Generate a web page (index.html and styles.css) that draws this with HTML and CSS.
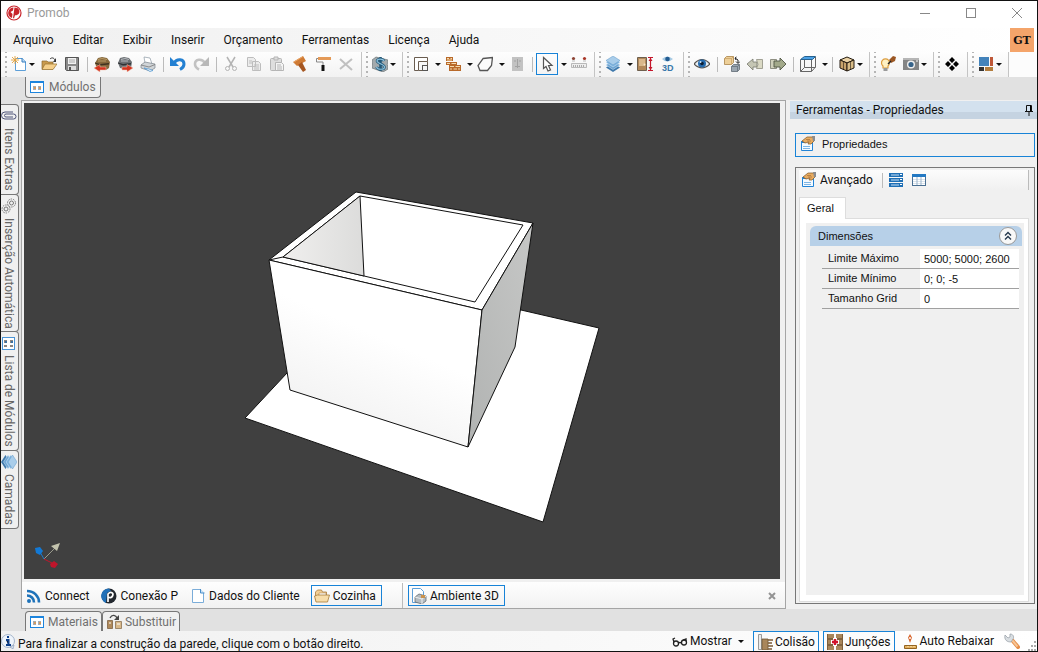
FILE: index.html
```html
<!DOCTYPE html>
<html lang="pt-br">
  <head>
    <meta charset="utf-8">

    <title>Promob</title>

    <link rel="stylesheet" href="styles.css">
  </head>

  <body>
    <!-- shared icons -->
    <svg class="sprite" width="0" height="0">
      <symbol id="i-modules" viewBox="0 0 16 16">
        <rect x="1.5" y="2.5" width="13" height="11" fill="#fff" stroke="#1c84dd"/>
        <path d="M1 2h14v2H1z" fill="#1c84dd"/>
        <path d="M4 7h3v4H4zM9 7h3v4H9z" fill="#a5acb3"/>
        <path d="M5 8h2v2H5zM10 8h2v2h-2z" fill="#d39a60"/>
      </symbol>
      <symbol id="i-layers" viewBox="0 0 16 16">
        <path d="M8 7l7 4.500-7 4.500-7-4.500z" fill="#3f79ac"/>
        <path d="M8 4.500l7 4.500-7 4.500L1 9z" fill="#6ba3d2" stroke="#dcebf7" stroke-width=".5"/>
        <path d="M8 2l7 4.500L8 11 1 6.500z" fill="#7fb4df" stroke="#dcebf7" stroke-width=".5"/>
        <path d="M8 0l7 4.500L8 9 1 4.500z" fill="#a9cdea" stroke="#5e98c8" stroke-width=".5"/>
      </symbol>
      <symbol id="i-hand" viewBox="0 0 16 16">
        <path d="M1.500 5.500h11v9h-11z" fill="#f4faff" stroke="#2384d6"/>
        <path d="M1 5h5v2H1z" fill="#2384d6"/>
        <path d="M3 10.500h7M3 12.500h7" stroke="#7db5e4"/>
        <path d="M2 5l5-4h7v4l-3 3H8l1-2-4 1z" fill="#e8ac62" stroke="#80531f" stroke-width=".7"/>
        <path d="M6 3.500h4M7 5h4" stroke="#a8713a" stroke-width=".7"/>
        <path d="M12 0h3v5h-2z" fill="#8b8d90"/>
      </symbol>
    </svg>

    <div class="window">
      <header class="titlebar">
        <svg class="logo" viewBox="0 0 16 16" width="16" height="16">
          <circle cx="8" cy="8" r="7" fill="#fff" stroke="#c8242b" stroke-width="1.2"/>
          <path d="M7.500 2.500A5.500 5.500 0 0 0 4 12l2 1 .5-4L4.500 7 7 5.500z" fill="#c8242b"/>
          <path d="M8.500 2.500c4 0 6 3 4.500 6-1 1.500-3 2-4 1.700L8 13.500l-1-.5L8 6z" fill="#c8242b"/>
        </svg>
        <h1>Promob</h1>
        <div class="window-buttons">
          <button aria-label="Minimizar"><svg width="12" height="12"><path d="M1 6.500h10" stroke="#888"/></svg></button>
          <button aria-label="Maximizar"><svg width="12" height="12"><rect x="1.500" y="1.500" width="9" height="9" fill="none" stroke="#888"/></svg></button>
          <button aria-label="Fechar"><svg width="12" height="12"><path d="M1 1l10 10M11 1L1 11" stroke="#888"/></svg></button>
        </div>
      </header>

      <nav class="menubar">
        <button>Arquivo</button>
        <button>Editar</button>
        <button>Exibir</button>
        <button>Inserir</button>
        <button>Orçamento</button>
        <button>Ferramentas</button>
        <button>Licença</button>
        <button>Ajuda</button>
        <button class="account">GT</button>
      </nav>

      <div class="toolbar">
        <div class="group">
          <button class="tool narrow" aria-label="Novo"><svg viewBox="0 0 16 16"><path d="M4.500 2.500h7l3 3v9h-10z" fill="#fff" stroke="#5d9fd8"/><path d="M11 2v4h4" fill="#b9d8f2" stroke="#3b7fbe"/><path d="M4 0v8M0 4h8M1 1l6 6M7 1L1 7" stroke="#e5a23a" stroke-width=".9"/></svg><i class="arrow"></i></button>
          <button class="tool" aria-label="Abrir"><svg viewBox="0 0 16 16"><path d="M1 13V5h5l1 1h5v7z" fill="#c99a4e" stroke="#8b682f" stroke-width=".7"/><path d="M1 13.500L4 8h12l-4 5.500z" fill="#f5cf8a" stroke="#95702f" stroke-width=".7"/><path d="M9 3c2-2 4-1 5 1" fill="none" stroke="#333"/><path d="M15 2v4h-3z" fill="#333"/></svg></button>
          <button class="tool" aria-label="Salvar"><svg viewBox="0 0 16 16"><path d="M1.500 1.500h13v13h-12l-1-1z" fill="#8a8a8a" stroke="#555"/><path d="M4 2h8v6H4z" fill="#f2f2f2"/><path d="M4 10h8v4H4z" fill="#ddd"/><path d="M5 11h2v3H5z" fill="#555"/><path d="M5 4h6M5 6h6" stroke="#aaa"/></svg></button>
          <span class="sep"></span>
          <button class="tool" aria-label="Importar"><svg viewBox="0 0 16 16"><path d="M4 2l4-1 5 1 3 4-1 6-3 2-9-1-2-6z" fill="#86683c"/><path d="M1 6.500l5 1.500 9-1v1.500l-9 1-5-2z" fill="#3f3220"/><path d="M4 3.500l4-1 5 1M4 5h8" fill="none" stroke="#b89a66"/><path d="M6 8.500v2.500h6v3H6v2L0 12z" fill="#d4341f" stroke="#f3c3b0" stroke-width=".5"/></svg></button>
          <button class="tool" aria-label="Exportar"><svg viewBox="0 0 16 16"><path d="M3 2l4-1 5 1 3 4-1 6-3 2-8-2-2-5z" fill="#6c7074"/><path d="M1 6.500l5 1.500 8-1v1.500l-8 1-5-2z" fill="#2f3234"/><path d="M4 3.500l4-1 4 1M4 5h7" fill="none" stroke="#b4b8bc"/><path d="M10 8.500v2.500H5v3h5v2l6-4z" fill="#d4341f" stroke="#f3c3b0" stroke-width=".5"/></svg></button>
          <button class="tool" aria-label="Imprimir"><svg viewBox="0 0 16 16"><path d="M4 1l6 1 2 6-7-1z" fill="#fff" stroke="#8d99a5" stroke-width=".7"/><path d="M1 9l4-3 10 2v4l-5 3-9-3z" fill="#d0d4d7" stroke="#7d858c" stroke-width=".7"/><path d="M1 9l8 2 6-2.500" fill="none" stroke="#777" stroke-width=".8"/><path d="M4 12l5 1 4 1.500-3 1z" fill="#e9f4fc" stroke="#3a8ccd" stroke-width=".6"/></svg></button>
          <span class="sep"></span>
          <button class="tool" aria-label="Desfazer"><svg viewBox="0 0 16 16"><path d="M4 7c3-5 10-4 10 1 0 3-2 4.500-4 5.500" fill="none" stroke="#2380d2" stroke-width="3"/><path d="M0 1v9h9z" fill="#2380d2"/></svg></button>
          <button class="tool" aria-label="Refazer"><svg viewBox="0 0 16 16"><path d="M12 7C9 2 2 3 2 8c0 3 2 4.500 4 5.500" fill="none" stroke="#c2c2c2" stroke-width="2.600"/><path d="M16 1v9H7z" fill="#b8b8b8"/></svg></button>
          <span class="sep"></span>
          <button class="tool" aria-label="Recortar"><svg viewBox="0 0 16 16" fill="none" stroke="#b4b4b4"><path d="M4 1l6 10M12 1L6 11" stroke-width="1.500"/><circle cx="4.500" cy="12.500" r="2"/><circle cx="11.500" cy="12.500" r="2"/></svg></button>
          <button class="tool" aria-label="Copiar"><svg viewBox="0 0 16 16" fill="#ececec" stroke="#bdbdbd"><path d="M1.500 1.500h6l2 2v7h-8zM6.500 5.500h6l2 2v7h-8z"/><path d="M3 5h3M3 7h3M8 9h5M8 11h5M8 13h5"/></svg></button>
          <button class="tool" aria-label="Colar"><svg viewBox="0 0 16 16" fill="#dedede" stroke="#b5b5b5"><rect x="1.500" y="2.500" width="11" height="12" rx="1"/><path d="M5 1h4v3H5z"/><path d="M6.500 6.500h6l2 2v6h-8z" fill="#f4f4f4"/><path d="M8 9h4M8 11h5M8 13h5"/></svg></button>
          <button class="tool" aria-label="Aplicar material"><svg viewBox="0 0 16 16"><path d="M1 6l10-6 3 5-9 5z" fill="#cf7b35"/><path d="M6 9l4-3 4 8-3 2z" fill="#a55620"/><path d="M2 6l9-5.500" stroke="#eaa566"/></svg></button>
          <button class="tool" aria-label="Pintar"><svg viewBox="0 0 16 16"><path d="M3 1h13v3H3z" fill="#e49a58"/><path d="M3 2.500H1.500V6H8v3" fill="none" stroke="#888"/><path d="M6.500 9h3v6h-3z" fill="#111"/></svg></button>
          <button class="tool" aria-label="Excluir"><svg viewBox="0 0 16 16"><path d="M2 3l12 11M14 3L2 13" stroke="#c0c0c0" stroke-width="2"/></svg></button>
        </div>

        <div class="group">
          <button class="tool narrow" aria-label="Orçamento"><svg viewBox="0 0 16 16"><path d="M0 4l4-3 12 3v3l-1 2 1 1v3l-5 3-11-4v-3l1-1-1-1z" fill="#a3aaad" stroke="#6a7276" stroke-width=".7"/><path d="M12 5C11 2.500 5 2.500 5 5s7.500 3 7.500 6-7 3-8 0M8.500 1v14" fill="none" stroke="#235877" stroke-width="2.600"/><path d="M12 5C11 2.500 5 2.500 5 5s7.500 3 7.500 6-7 3-8 0" fill="none" stroke="#8cc2df" stroke-width="1.200"/></svg><i class="arrow"></i></button>
        </div>

        <div class="group">
          <button class="tool wide" aria-label="Ambiente"><svg viewBox="0 0 16 16" fill="none"><path d="M1.500 14.500v-13h13v4h-9v9z" fill="#fff" stroke="#6a5d50"/><rect x="9.500" y="9.500" width="5" height="5" stroke="#555"/><path d="M9.500 14.500h-4M14.500 9.500v-4" stroke="#6a5d50"/></svg><i class="arrow"></i></button>
          <button class="tool wide" aria-label="Paredes"><svg viewBox="0 0 16 16"><path d="M1 1h7v4H1zM1 6h11v3H1zM4 9h12v6H4z" fill="#b8692a"/><path d="M2 2.500h2M5.500 2.500H7M2 4h5M2 7.500h3M6.500 7.500H11M5 10.500h4M10.500 10.500H15M5 13h2M8.500 13H12M13 13h2" stroke="#f5dcae" stroke-width="1.200"/></svg><i class="arrow"></i></button>
          <button class="tool wide" aria-label="Piso"><svg viewBox="0 0 16 16"><path d="M6 2.500l9.500-1-1 8-4 5H3l-2-5z" fill="#fbfbfb" stroke="#555" stroke-width="1.300"/></svg><i class="arrow"></i></button>
          <button class="tool" aria-label="Porta"><svg viewBox="0 0 16 16"><path d="M3 1h11v14H3z" fill="#c2c2c2"/><path d="M8.500 3v9M6 10.500h5M10 5h2M5 5h2" stroke="#a2a2a2"/></svg></button>
          <span class="sep"></span>
          <button class="tool wide pressed" aria-label="Selecionar"><svg viewBox="0 0 16 16"><path d="M4.500 1.500v11l2.500-2 2 4.500 2.500-1-2-4.500h3.500z" fill="#fff" stroke="#555" stroke-width="1.200"/></svg><i class="arrow"></i></button>
          <button class="tool" aria-label="Medir"><svg viewBox="0 0 16 16"><path d="M.5 7.500h15v4H.5z" fill="#eee" stroke="#aaa" stroke-width=".8"/><path d="M2.500 9v2M4.500 9v2M6.500 9v2M8.500 9v2M10.500 9v2M12.500 9v2" stroke="#999" stroke-width=".8"/><circle cx="2.500" cy="2.500" r="1.600" fill="#8c4334"/><circle cx="13.500" cy="2.500" r="1.600" fill="#a93627"/><path d="M1 5h3M12 5h3" stroke="#bbb"/></svg></button>
        </div>

        <div class="group">
          <button class="tool wide" aria-label="Camadas"><svg><use href="#i-layers"/></svg><i class="arrow"></i></button>
          <button class="tool" aria-label="Altura"><svg viewBox="0 0 16 16"><path d="M.5 1.500h9v13h-9z" fill="#b2885a" stroke="#6e5f4d"/><path d="M2 3h6v7H2z" fill="#d9b88c"/><circle cx="7.500" cy="8.500" r="1" fill="#f5e3c5"/><path d="M11 1.500h5M11 14.500h5M13.500 2v12" stroke="#c4162b" stroke-width="1.200"/><path d="M11.500 5l2-3 2 3zM11.500 11l2 3 2-3z" fill="#c4162b"/></svg></button>
          <button class="tool" aria-label="Visualizar 3D"><svg viewBox="0 0 16 16"><path d="M2 3q5-5 11 0-6 5-11 0z" fill="#a6cae4"/><circle cx="7.500" cy="3" r="2.300" fill="#235c91"/><text class="icon-text" x="2" y="15">3D</text></svg></button>
        </div>

        <div class="group">
          <button class="tool" aria-label="Mostrar"><svg viewBox="0 0 16 16"><path d="M0 8q8-9 16 0-8 8-16 0z" fill="#e8eef3" stroke="#57534f" stroke-width="1.200"/><circle cx="8" cy="7.500" r="4" fill="#266bad"/><circle cx="8" cy="7.500" r="1.800" fill="#0d1e33"/><circle cx="6.500" cy="6" r="1" fill="#cfe5f7"/></svg></button>
          <span class="sep"></span>
          <button class="tool" aria-label="Trocar"><svg viewBox="0 0 16 16"><path d="M.5 2.500l2-2h7v6l-2 2h-7z" fill="#edcf98" stroke="#a98349" stroke-width=".8"/><path d="M.5 2.500h7l2-2M7.500 2.500v6" fill="none" stroke="#c9a368" stroke-width=".8"/><path d="M7.500 10.500l2-2h6v5l-2 2h-6z" fill="#9ba6b0" stroke="#5f6a74" stroke-width=".8"/><path d="M7.500 10.500h6l2-2M13.500 10.500v5" fill="none" stroke="#5f6a74" stroke-width=".7"/><path d="M11 2l3 2v3M12 5.500l2 2 2-2M12.500 1L11 2l1 2" fill="none" stroke="#222"/></svg></button>
          <button class="tool" aria-label="Anterior"><svg viewBox="0 0 16 16"><path d="M0 8l6-5v3h4v5H6v3z" fill="#c5c6b4" stroke="#77786d" stroke-width=".8"/><path d="M9.500 3.500h6v9h-6l1.500-4z" fill="#dad9c4" stroke="#8e8e80" stroke-width=".8"/></svg></button>
          <button class="tool" aria-label="Próximo"><svg viewBox="0 0 16 16"><path d="M.5 3.500h6v9h-6z" fill="#cfd0bb" stroke="#77786b" stroke-width=".8"/><path d="M16 8l-6-6v3H4v6h6v3z" fill="#a2a98a" stroke="#4f5544" stroke-width=".9"/></svg></button>
          <span class="sep"></span>
          <button class="tool wide" aria-label="Vista"><svg viewBox="0 0 16 16" fill="none" stroke="#666"><path d="M4.500.5h11l-3 3h-12z" fill="#4aa0e5" stroke="#28628f"/><path d="M.5 4v11.500h11V4M15.500 1v10l-4 4.500M4.500 4v7.500h11M.5 15.500l4-4"/></svg><i class="arrow"></i></button>
          <span class="sep"></span>
          <button class="tool narrow" aria-label="Renderização"><svg viewBox="0 0 16 16" stroke="#241b10"><path d="M1 4l7-3 7 3-7 3z" fill="#ead2a5"/><path d="M1 4l7 3v8l-7-3z" fill="#c8a36b"/><path d="M8 7l7-3v8l-7 3z" fill="#d9bd88"/><path d="M4.500 5.500v8M11.500 5.500v8" stroke-width=".6"/></svg><i class="arrow"></i></button>
        </div>

        <div class="group">
          <button class="tool" aria-label="Luz"><svg viewBox="0 0 16 16"><path d="M3 10a4 4 0 1 1 5 0v2H3z" fill="#fff1c3" stroke="#dc9d3e" stroke-width="1.200"/><path d="M3.500 12h4v3h-4z" fill="#999"/><path d="M9 4l4-4 3 1-1 4-4 2z" fill="#9b5723"/><path d="M8 8l3-3" stroke="#222" stroke-width="1.400"/></svg></button>
          <button class="tool narrow" aria-label="Câmera"><svg viewBox="0 0 16 16"><path d="M0 2h16v12H0z" fill="#848484"/><path d="M0 2h16v2H0z" fill="#b6b6b6"/><circle cx="8" cy="8.500" r="4" fill="#eee"/><circle cx="8" cy="8.500" r="2.600" fill="#376389"/><path d="M13 5h2" stroke="#fff"/></svg><i class="arrow"></i></button>
        </div>

        <div class="group">
          <button class="tool" aria-label="Plugins"><svg viewBox="0 0 16 16"><path d="M8 1l3 3-3 3-3-3zM4 5l3 3-3 3-3-3zM12 5l3 3-3 3-3-3zM8 9l3 3-3 3-3-3z" fill="#000"/></svg></button>
        </div>

        <div class="group">
          <button class="tool narrow" aria-label="Leiaute"><svg viewBox="0 0 16 16"><path d="M1 1h10v9H1z" fill="#4383bb"/><path d="M12 1h3v9h-3z" fill="#be5738"/><path d="M1 11h5v4H1z" fill="#333"/><path d="M7 11h8v4H7z" fill="#b37d3d"/></svg><i class="arrow"></i></button>
        </div>
      </div>

      <div class="tabs tabs-top">
        <button class="tab"><svg><use href="#i-modules"/></svg>Módulos</button>
      </div>

      <main class="workspace">
        <div class="side-tabs">
          <button class="side-tab"><svg viewBox="0 0 16 16" fill="none" stroke="#4e5479"><path d="M12 4H4a3.500 3.500 0 0 0 0 7h8.500a2.500 2.500 0 0 0 0-5H5a1.500 1.500 0 0 0 0 3h7"/></svg>Itens Extras</button>
          <button class="side-tab"><svg viewBox="0 0 16 16" fill="none" stroke="#777"><circle cx="10.500" cy="5" r="4" stroke-dasharray="1.500 1"/><circle cx="10.500" cy="5" r="2"/><circle cx="5" cy="11" r="4" stroke-dasharray="1.500 1"/><circle cx="5" cy="11" r="2"/></svg>Inserção Automática</button>
          <button class="side-tab"><svg viewBox="0 0 16 16"><rect x="1.500" y="2.500" width="12" height="12" fill="#fff" stroke="#4a94d6"/><path d="M3 5h3v3H3zM9 5h3v3H9zM3 10h3v2H3zM9 10h3v2H9z" fill="#8b8580"/><path d="M4 6h2v2H4zM10 6h2v2h-2z" fill="#3c70a0"/></svg>Lista de Módulos</button>
          <button class="side-tab"><svg class="turned"><use href="#i-layers"/></svg>Camadas</button>
        </div>

        <section class="document">
          <svg class="scene" viewBox="24 103 756 476" role="img" aria-label="Ambiente 3D">
            <defs>
              <linearGradient id="front" x1=".7" y1="0" x2=".2" y2="1"><stop offset=".4" stop-color="#fff"/><stop offset="1" stop-color="#eee"/></linearGradient>
              <linearGradient id="side" x1="0" y1="1" x2="1" y2="0"><stop offset="0" stop-color="#b1b3b2"/><stop offset="1" stop-color="#c6c7c6"/></linearGradient>
              <linearGradient id="inner"><stop offset="0" stop-color="#f0efee"/><stop offset="1" stop-color="#dcdcdb"/></linearGradient>
            </defs>
            <g stroke="#111" stroke-linejoin="round">
              <path d="M245 418l42-45 234-63 78 18-56 194z" fill="#fff"/>
              <path d="M269 260l87-68 177 31-51 87z" fill="#fff"/>
              <path d="M283 257l77-61 163 29-48 77z" fill="#fff"/>
              <path d="M283 257l77-61 4 80z" fill="url(#inner)"/>
              <path d="M269 260l14-3" fill="none"/>
              <path d="M269 260l213 50-14 137-178-57z" fill="url(#front)"/>
              <path d="M482 310l51-87-18 124-47 100z" fill="url(#side)"/>
            </g>
            <path d="M44 559l12-12" stroke="#999a8c"/>
            <path d="M60 543l-3 8-6-5z" fill="#c3c3ad"/>
            <path d="M44 559l-4-7" stroke="#1b7bd0"/>
            <path d="M35 548l5-1 3 4-3 4-4-2z" fill="#1279d6"/>
            <path d="M44 559l8 4" stroke="#c0152b"/>
            <path d="M50 564l4-3 4 3-3 4-4-1z" fill="#c0152b"/>
          </svg>

          <div class="views">
            <div class="view-group first">
              <button class="view"><svg viewBox="0 0 16 16" fill="none" stroke="#1e72b9" stroke-width="2.600"><path d="M1 7.500c4 0 7 3 7 7M1 3c7 0 12 5 12 11.500"/><circle cx="3" cy="13" r="1" fill="#1e72b9" stroke-width="2"/></svg>Connect</button>
              <button class="view"><svg viewBox="0 0 16 16"><circle cx="8" cy="8" r="7.500" fill="#23282f"/><path d="M8 .5A7.500 7.500 0 0 0 5 15L6 5l4-2z" fill="#2170b8"/><path d="M7 14V6c3-3 6-1 4.500 2-1 2-3 2-4 1" fill="none" stroke="#fff" stroke-width="1.700"/></svg>Conexão P</button>
              <button class="view"><svg viewBox="0 0 16 16"><path d="M2.500 1.500h8l3 3v10h-11z" fill="#fff" stroke="#7badd9"/><path d="M10.500 1v4h4" fill="#c9e2f7" stroke="#4b8fca"/></svg>Dados do Cliente</button>
              <button class="view current"><svg viewBox="0 0 16 16"><path d="M1.500 12V4l2-2h4l1 2h4v8z" fill="#f2cf95" stroke="#a87b3c" stroke-width=".8"/><path d="M5 5h7v4H5z" fill="#fff" stroke="#b58b4d" stroke-width=".6"/><path d="M.5 8l3-1h12l-2 7H2z" fill="#f7ddaa" stroke="#a67b38" stroke-width=".8"/></svg>Cozinha</button>
            </div>
            <div class="view-group">
              <button class="view current"><svg viewBox="0 0 16 16"><path d="M1.500.5h8l3 3v11h-11z" fill="#fff" stroke="#5d9fd8"/><path d="M4 9l4-3 7 2v5l-4 3-7-2z" fill="#b4bbc0" stroke="#666d73" stroke-width=".8"/><path d="M4 9l7 2 4-3M11 11v5" fill="none" stroke="#eee"/><path d="M10 7h4v3h-4z" fill="#c9914b"/></svg>Ambiente 3D</button>
            </div>
            <button class="close" aria-label="Fechar vista"><svg viewBox="0 0 8 8" width="8" height="8"><path d="M1 1l6 6M7 1L1 7" stroke="#949494" stroke-width="2"/></svg></button>
          </div>
        </section>

        <aside class="panel">
          <h2>Ferramentas - Propriedades<svg viewBox="0 0 8 12" width="8" height="12"><path d="M1.500 7V1.500h5V7M0 7.500h8M4 8v4" fill="none" stroke="#111"/><path d="M5 1h1v6H5z"/></svg></h2>
          <button class="panel-switch"><svg><use href="#i-hand"/></svg>Propriedades</button>
          <div class="properties">
            <div class="prop-toolbar">
              <button class="advanced"><svg><use href="#i-hand"/></svg>Avançado</button>
              <span class="sep"></span>
              <button aria-label="Categorias"><svg viewBox="0 0 16 16"><path d="M1 1h14v4H1zM1 6h14v4H1zM1 11h14v4H1z" fill="#1f6fb5"/><path d="M3 3h8M3 8h8M3 13h8" stroke="#c8e1f6"/><path d="M12 2.500h2M12 7.500h2M12 12.500h2" stroke="#fff"/></svg></button>
              <button aria-label="Tabela"><svg viewBox="0 0 16 16"><rect x="1.500" y="2.500" width="13" height="11" fill="#fff" stroke="#4a6f92"/><path d="M1 2h14v3H1z" fill="#2479c3"/><path d="M2 7.500h12M2 9.500h12M2 11.500h12" stroke="#dbe4ec"/><path d="M6 5v8M10 5v8" stroke="#9db5cb"/></svg></button>
            </div>
            <button class="page-tab">Geral</button>
            <div class="page">
              <div class="page-inner">
                <h3>Dimensões<button aria-label="Recolher"><svg viewBox="0 0 16 16"><path d="M5 7.500l3-3 3 3M5 11.500l3-3 3 3" fill="none" stroke="#26394d" stroke-width="1.400"/></svg></button></h3>
                <div class="fields">
                  <label for="limiteMax">Limite Máximo</label><input type="text" id="limiteMax" value="5000; 5000; 2600">
                  <label for="limiteMin">Limite Mínimo</label><input type="text" id="limiteMin" value="0; 0; -5">
                  <label for="grid">Tamanho Grid</label><input type="text" id="grid" value="0">
                </div>
              </div>
            </div>
          </div>
        </aside>
      </main>

      <div class="tabs tabs-bottom">
        <button class="tab"><svg><use href="#i-modules"/></svg>Materiais</button>
        <button class="tab"><svg viewBox="0 0 16 16"><path d="M1.500 6.500h5v8h-5z" fill="#b08a5b" stroke="#7d6142" stroke-width=".8"/><path d="M9.500 7.500h6v7h-6z" fill="#d9b98b" stroke="#8b7252" stroke-width=".8"/><path d="M3 9h2M11 10h3" stroke="#fff"/><path d="M4 4c2-4 6-3 7 0" fill="none" stroke="#444" stroke-width="1.300"/><path d="M13 1v5H8z" fill="#444"/></svg>Substituir</button>
      </div>

      <footer class="statusbar">
        <svg class="info" viewBox="0 0 16 16"><circle cx="7" cy="8" r="6.500" fill="#eef4fb" stroke="#a5b5cb"/><path d="M9 14l3 2 1-4z" fill="#d7e2ef" stroke="#8195b3" stroke-width=".6"/><path d="M7 3v2M5 7h2.500v5M5 12h5" stroke="#0e3f8a" stroke-width="2"/></svg>
        <p>Para finalizar a construção da parede, clique com o botão direito.</p>
        <button class="status show"><svg viewBox="0 0 16 16" fill="none" stroke="#222" stroke-width="1.300"><circle cx="4" cy="10.500" r="2.500"/><circle cx="12" cy="9.500" r="2.500"/><path d="M6.500 10q1.500-1 3 0M2 9L1 6l2-1M14 8V6l-3 1"/></svg>Mostrar<i class="arrow"></i></button>
        <button class="status on"><svg viewBox="0 0 16 16"><path d="M1.500.5h3v15h-3z" fill="#ececec" stroke="#999"/><path d="M5 5h6v11H5z" fill="#a9865b" stroke="#6d5539" stroke-width=".8"/><path d="M11 6h5M11 9h4M11 12h5M11 15h4" stroke="#7b5a34" stroke-width="1.500"/></svg>Colisão</button>
        <button class="status on"><svg viewBox="0 0 16 16"><path d="M0 0h7v16H0zM9 0h7v16H9z" fill="#a9865b"/><path d="M0 5h7M9 5h7M0 11h7M9 11h7" stroke="#5a4024"/><path d="M.5 0v16M15.500 0v16" stroke="#7f5f3a"/><path d="M8 4v8M4 8h8" stroke="#fff" stroke-width="4"/><path d="M8 5v6M5 8h6" stroke="#d3122a" stroke-width="2.400"/></svg>Junções</button>
        <button class="status"><svg viewBox="0 0 16 16"><path d="M2.500 12.500h12v3h-12z" fill="#e3b060" stroke="#946421"/><path d="M6 13v1M9 13v1M12 13v1" stroke="#fff2c5"/><path d="M8 1l2 3.500L8 10 6 4.500z" fill="#d7642b"/><circle cx="8" cy="5" r="1" fill="#fff"/></svg>Auto Rebaixar</button>
        <button class="status wrench" aria-label="Configurações"><svg viewBox="0 0 16 16"><path d="M8 7l6 7" stroke="#e58d4a" stroke-width="4" stroke-linecap="round"/><path d="M8 7l5.500 6.500" stroke="#f7c595" stroke-width="2"/><path d="M1 2l3 3 2-1V1c4 0 4 4 3 5L7 9C3 9 0 7 1 2z" fill="#d9dee2" stroke="#9aa2a9" stroke-width=".8"/></svg></button>
        <svg class="size-grip" viewBox="0 0 10 10"><path d="M7 0h2v2H7zM4 4h2v2H4zM7 4h2v2H7zM1 8h2v2H1zM4 8h2v2H4zM7 8h2v2H7z" fill="#aaa"/></svg>
      </footer>
    </div>
  </body>
</html>
```

FILE: styles.css
```css
* {
  box-sizing: border-box;
}

body {
  margin: 0;
  font-family: Roboto, "Open Sans", sans-serif;
  font-size: 12px;
  color: #111;
}

h1, h2, h3, p {
  margin: 0;
  font-size: 12px;
  font-weight: normal;
}

button {
  display: flex;
  align-items: center;
  padding: 0;
  border: 0;
  background: none;
  font: inherit;
  color: inherit;
  white-space: nowrap;
}

svg {
  display: block;
  flex: none;
}

.sprite {
  position: absolute;
}

.window {
  display: flex;
  flex-direction: column;
  height: 100vh;
  border: 1px solid #111;
  background: #e1e1e1;
}

/* title and menu */
.titlebar {
  display: flex;
  align-items: center;
  height: 27px;
  padding: 0 8px 4px 5px;
  background: #fff;
}

.titlebar h1 {
  flex: 1;
  margin-left: 5px;
  color: #999;
}

.window-buttons {
  display: flex;
  gap: 34px;
  padding-right: 6px;
}

.menubar {
  display: flex;
  align-items: center;
  height: 24px;
  padding-left: 12px;
  gap: 19px;
  background: linear-gradient(to right, #f0f0f0, #fff);
}

.menubar .account {
  justify-content: center;
  width: 24px;
  height: 24px;
  margin-left: auto;
  margin-right: 3px;
  background: #f4a46a;
  font-family: "DejaVu Serif", serif;
  font-size: 11px;
  font-weight: bold;
}

/* toolbar */
.toolbar {
  display: flex;
  height: 25px;
  background: #fcfcfc;
}

.group {
  display: flex;
  flex: none;
  align-items: center;
  padding: 0 3px 1px 7px;
  border-right: 1px solid #c4c4c4;
  background:
    linear-gradient(#b5b5b5 2px, transparent 2px) 4px 4px / 2px 5px repeat-y,
    linear-gradient(#fefefe, #f2f2f2);
}

.tool {
  width: 23px;
  height: 22px;
  padding-left: 3px;
}

.tool svg,
.tab svg,
.side-tab svg,
.view svg,
.panel button svg,
.statusbar svg {
  width: 16px;
  height: 16px;
}

.tool.narrow {
  width: 30px;
}

.tool.wide {
  width: 32px;
}

.arrow {
  border: 3px solid transparent;
  border-top-color: #111;
  border-bottom: 0;
}

.narrow .arrow {
  margin-left: 2px;
}

.wide .arrow {
  margin-left: 6px;
}

.pressed {
  background: linear-gradient(#1883d7, #1883d7) 0 0 / 22px 1px no-repeat,
    linear-gradient(#1883d7, #1883d7) 0 100% / 22px 1px no-repeat,
    linear-gradient(#1883d7, #1883d7) 0 0 / 1px 22px no-repeat,
    linear-gradient(#1883d7, #1883d7) 21px 0 / 1px 22px no-repeat;
}

.icon-text {
  font: bold 9px "Liberation Sans", sans-serif;
  fill: #3977aa;
}

.sep {
  width: 1px;
  height: 15px;
  margin: 0 3px;
  background: #bbb;
}

/* tabs round the document */
.tabs {
  display: flex;
  align-items: flex-start;
  flex: none;
  padding-left: 24px;
}

.tab {
  height: 21px;
  padding: 0 4px 0 3px;
  gap: 4px;
  border: 1px solid #777;
  background: #f0f0f0;
  color: #707070;
}

.tabs-top {
  height: 23px;
}

.tabs-top .tab {
  border-top: 0;
  border-radius: 0 0 4px 4px;
}

.tabs-bottom {
  height: 22px;
  padding-top: 2px;
}

.tabs-bottom .tab {
  height: 20px;
  padding: 0 3px;
  gap: 3px;
  border-bottom: 0;
  border-radius: 4px 4px 0 0;
}

.workspace {
  display: flex;
  flex: 1;
  min-height: 0;
}

.side-tabs {
  flex: none;
  width: 20px;
  padding-top: 4px;
}

.side-tab {
  width: 18px;
  padding: 3px 2px 3px 0;
  gap: 4px;
  border: 1px solid #777;
  border-left: 0;
  border-radius: 0 4px 4px 0;
  background: #f0f0f0;
  writing-mode: vertical-rl;
  color: #666;
}

.side-tab + .side-tab {
  margin-top: -1px;
}

.turned {
  transform: rotate(90deg);
}

/* document */
.document {
  display: flex;
  flex-direction: column;
  flex: 1;
  min-width: 0;
  border: 1px solid #a5a5a5;
  background: #f0f0f0;
}

.scene {
  flex: 1;
  min-height: 0;
  margin: 2px 5px 0 2px;
  background: #404040;
}

.views {
  display: flex;
  height: 26px;
  margin-top: 3px;
  padding-top: 1px;
  background: linear-gradient(#fefefe, #f2f2f2);
}

.view-group {
  display: flex;
  align-items: center;
  padding: 0 5px;
  gap: 10px;
}

.view-group.first {
  width: 381px;
  padding-left: 3px;
  border-right: 1px solid #bbb;
}

.view {
  height: 21px;
  padding: 0 1px;
  gap: 3px;
}

.view.current {
  padding: 0 5px 0 2px;
  border: 1px solid #1883d7;
}

.close {
  margin: 0 9px 0 auto;
}

/* properties panel */
.panel {
  display: flex;
  flex-direction: column;
  flex: none;
  width: 251px;
  padding: 1px 0 5px 4px;
  background: #f0f0f0;
}

.panel h2 {
  display: flex;
  align-items: center;
  justify-content: space-between;
  height: 18px;
  padding: 0 4px 0 6px;
  background: linear-gradient(#d3e1ee 60%, #c5d3e1 60%);
}

.panel-switch {
  height: 24px;
  margin: 14px 2px 0 5px;
  padding: 0 0 2px 4px;
  gap: 6px;
  border: 1px solid #1883d7;
}

.panel-switch,
.properties {
  font-family: "Liberation Sans", Arial, sans-serif;
  font-size: 11px;
}

.properties {
  display: flex;
  flex-direction: column;
  align-items: flex-start;
  flex: 1;
  margin: 10px 2px 0 5px;
  padding: 2px 5px 1px 3px;
  border: 1px solid #777;
}

.prop-toolbar {
  display: flex;
  align-items: center;
  align-self: stretch;
  height: 20px;
  gap: 7px;
  border-right: 1px solid #bbb;
  background: linear-gradient(#fcfcfc, #f0f0f0);
}

.prop-toolbar .sep {
  margin: 0 -2px 0 2px;
}

.advanced {
  padding-left: 2px;
  gap: 3px;
  font-family: Roboto, "Open Sans", sans-serif;
  font-size: 12px;
}

.page-tab {
  position: relative;
  height: 22px;
  margin: 7px 0 -1px;
  padding: 0 11px 2px 7px;
  border: 1px solid #ddd;
  border-bottom: 0;
  background: #fff;
}

.page {
  display: flex;
  flex: 1;
  align-self: stretch;
  padding: 4px 4px 6px 6px;
  border: 1px solid #ddd;
  background: #fff;
}

.page-inner {
  flex: 1;
  padding: 3px 2px 0 4px;
  background: #f0f0f0;
}

.page-inner h3 {
  display: flex;
  align-items: center;
  justify-content: space-between;
  height: 20px;
  padding: 0 5px 0 8px;
  border-radius: 6px 6px 0 0;
  background: #b7d0e8;
  font-size: 11px;
}

.page-inner h3 button {
  border: 1px solid #999;
  border-radius: 50%;
  background: #f8f8f8;
}

.fields {
  display: grid;
  grid-template-columns: 98px 1fr;
  padding: 3px 3px 0 12px;
}

.fields label,
.fields input {
  height: 20px;
  padding: 0 6px;
  border: 0;
  border-bottom: 1px solid #a0a0a0;
  line-height: 19px;
}

.fields input {
  width: 100%;
  min-width: 0;
  padding: 0 4px;
  background: #fff;
  font: inherit;
  color: inherit;
}

/* status bar */
.statusbar {
  display: flex;
  align-items: center;
  flex: none;
  height: 20px;
  gap: 4px;
  background: linear-gradient(to right, #f0f0f0, #fff);
}

.statusbar p {
  flex: 1;
  margin-left: -3px;
  padding-top: 5px;
  white-space: nowrap;
}

.status {
  height: 20px;
  padding: 0 3px;
  gap: 2px;
}

.status.on {
  border: 1px solid #1883d7;
  border-bottom: 0;
}

.show {
  padding-right: 5px;
}

.show .arrow {
  margin-left: 4px;
}

.statusbar .size-grip {
  width: 10px;
  height: 10px;
  align-self: flex-end;
}
```
